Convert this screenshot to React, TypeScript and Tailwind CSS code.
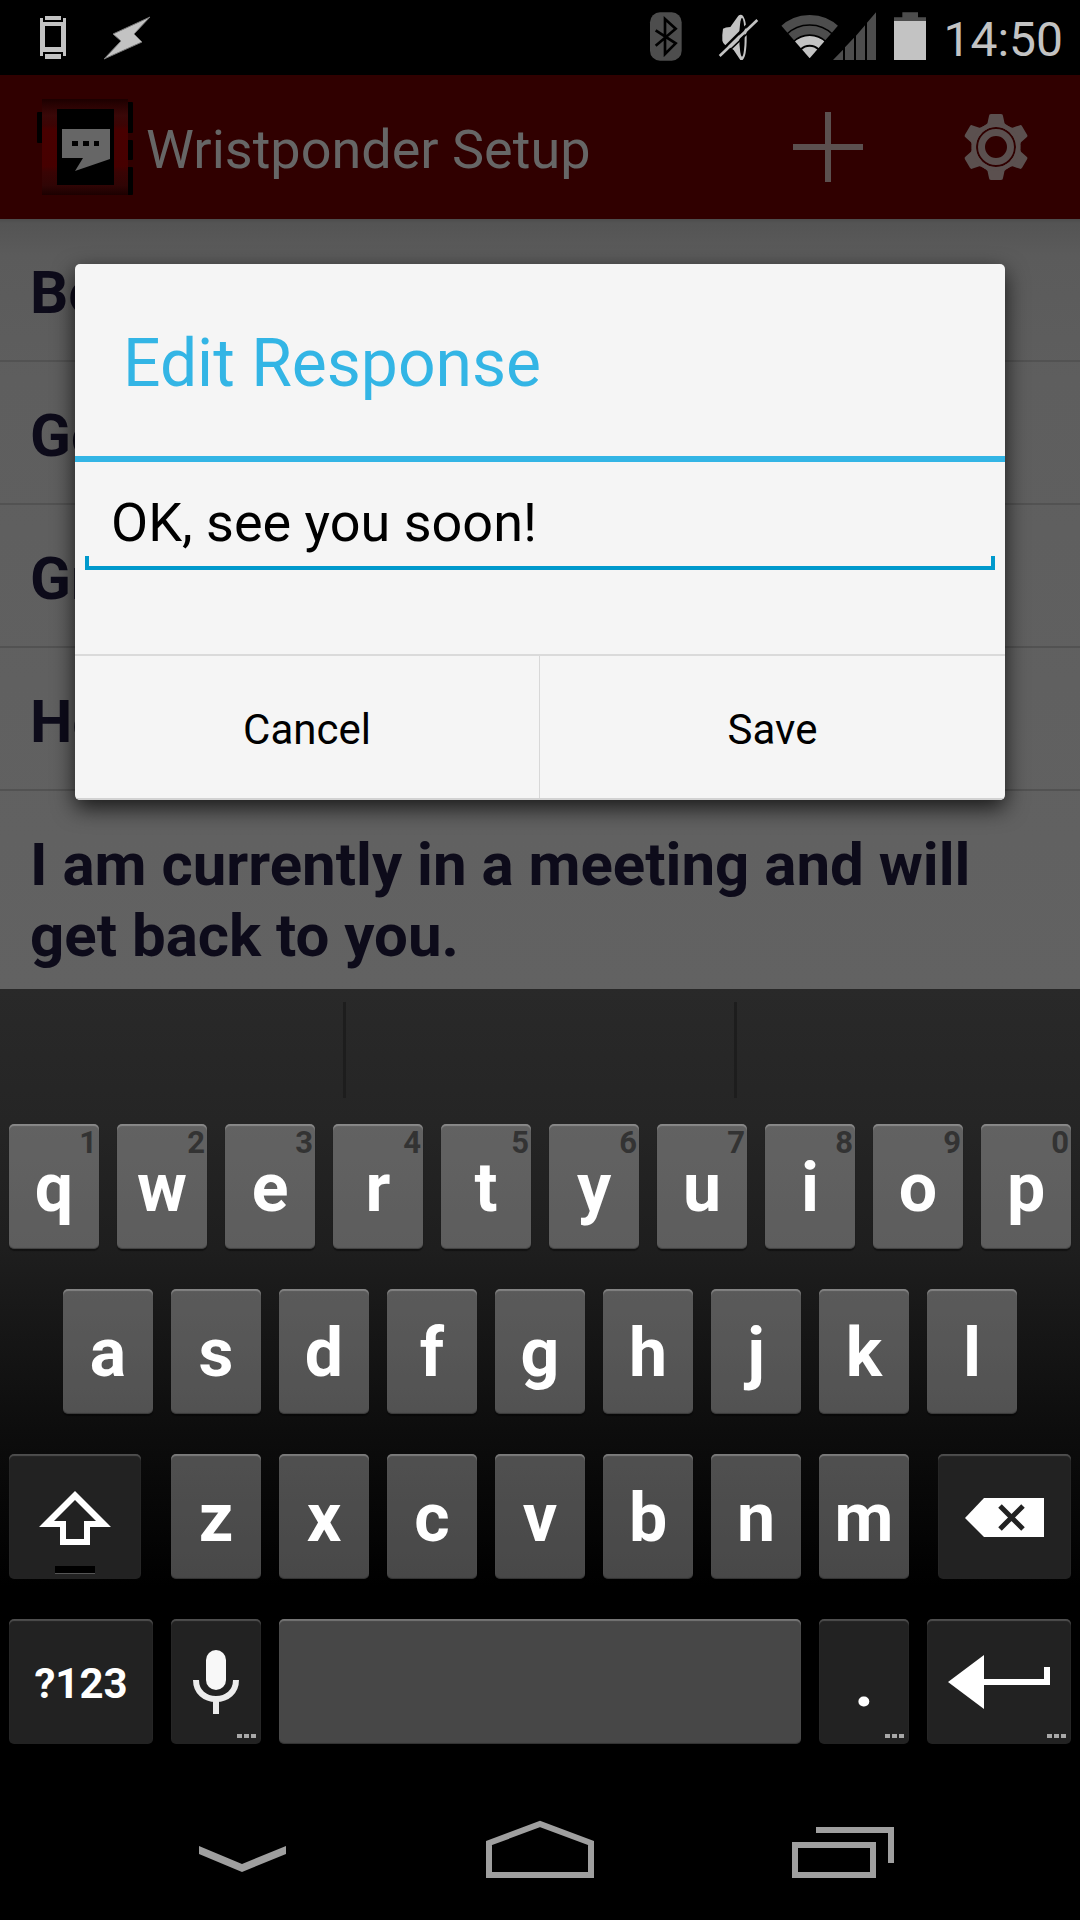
import React, { useState } from "react";

const responses = ["Be", "Go", "Gr", "He", "I am currently in a meeting and will get back to you."];

function StatusBar() {
  return (
    <header className="flex h-[75px] shrink-0 items-start justify-between bg-black pt-3 pr-[17px] pl-10">
      <div className="flex items-start gap-[38px]">
        <svg width="26" height="48" viewBox="0 0 26 48" fill="#c3c3c3" aria-hidden="true">
          <path d="M5 4h16v4H5zM5 42h16v5H5z" />
          <path fillRule="evenodd" d="M0 6h3v4h20V6h3v38h-3v-4H3v4H0zM5 14v21h16V14z" />
        </svg>
        <svg width="48" height="48" viewBox="0 0 48 48" fill="#c3c3c3" aria-hidden="true">
          <path d="M46 5L9 22l8 7L0 47l38-17-8-8z" stroke="#777" strokeWidth="1" strokeLinejoin="round" />
        </svg>
      </div>
      <div className="flex items-start">
        <svg width="34" height="50" viewBox="150 36 102 150" aria-hidden="true">
          <rect x="153" y="37" width="95" height="145" rx="30" fill="#4d4d4d" />
          <path d="M170 91L230 130L198 162V57L230 86L170 137" fill="none" stroke="#000" strokeWidth="8" />
        </svg>
        <svg className="ml-[35px]" width="41" height="50" viewBox="357 36 123 150" aria-hidden="true">
          <path d="M372 86Q379 81 394 81L418 47Q423 43 429 45Q443 55 443 112Q443 170 431 180H424L404 150L390 140Q374 136 370 122Q369 104 372 86Z" fill="#c3c3c3" />
          <ellipse cx="429" cy="112" rx="8" ry="58" fill="#000" />
          <path d="M362 158L470 50" stroke="#000" strokeWidth="8" />
          <path d="M362 168L475 60" stroke="#c3c3c3" strokeWidth="8" />
          <path d="M368 174L481 66" stroke="#000" strokeWidth="5" />
        </svg>
        <svg className="ml-5" width="99" height="50" viewBox="537 36 297 150" aria-hidden="true">
          <defs>
            <clipPath id="wifi-fan">
              <path d="M629 175L511 39L570 0H690L747 39Z" />
            </clipPath>
          </defs>
          <g clipPath="url(#wifi-fan)" fill="none">
            <circle cx="629" cy="175" r="116" stroke="#4d4d4d" strokeWidth="28" />
            <circle cx="629" cy="175" r="85" stroke="#4d4d4d" strokeWidth="26" />
            <circle cx="629" cy="175" r="54" stroke="#c3c3c3" strokeWidth="26" />
            <circle cx="629" cy="175" r="35" fill="#c3c3c3" />
          </g>
          <path d="M699 180L729 149V180ZM735 180V142L762 113V180ZM768 180V107L795 76V180ZM801 180V68L828 37V180Z" fill="#4d4d4d" />
        </svg>
        <svg className="ml-4" width="32" height="50" viewBox="876 36 96 150" aria-hidden="true">
          <path d="M876 63V52H901V37H948V52H972V63Z" fill="#4d4d4d" />
          <path d="M876 63H972V180H876Z" fill="#c3c3c3" />
        </svg>
        <time className="ml-[17px] text-[48px] leading-[56px] text-[#c3c3c3]">14:50</time>
      </div>
    </header>
  );
}

function AppIcon() {
  return (
    <svg width="96" height="96" viewBox="0 0 96 96" aria-hidden="true">
      <defs>
        <linearGradient id="strap" x1="0" y1="0" x2="0" y2="1">
          <stop offset="0" stopColor="#1c0000" />
          <stop offset="0.08" stopColor="#2c0303" />
          <stop offset="0.17" stopColor="#3a0808" />
          <stop offset="0.27" stopColor="#3c0404" />
          <stop offset="0.32" stopColor="#480000" />
          <stop offset="0.7" stopColor="#460000" />
          <stop offset="0.76" stopColor="#390404" />
          <stop offset="0.9" stopColor="#300505" />
          <stop offset="1" stopColor="#1c0000" />
        </linearGradient>
      </defs>
      <rect x="0" y="13" width="8" height="31" rx="1" fill="#000" />
      <rect x="88" y="3" width="8" height="31" rx="1" fill="#000" />
      <rect x="88" y="41" width="8" height="20" rx="1" fill="#000" />
      <rect x="88" y="68" width="8" height="28" rx="1" fill="#000" />
      <rect x="5" y="0" width="86" height="96" fill="url(#strap)" />
      <rect x="20" y="10" width="57" height="76" fill="#000" />
      <path d="M25 30H73V60L38 72L46 59H25Z" fill="#666" />
      <path d="M35 42h6v5h-6zM46 42h6v5h-6zM57 42h5v5h-5z" fill="#000" />
    </svg>
  );
}

function ActionBar() {
  return (
    <div className="flex h-36 shrink-0 items-center bg-[#300000] pr-[51px] pl-[37px]">
      <AppIcon />
      <h1 className="ml-[13px] flex-1 pt-[6px] text-[54px] leading-[64px] text-[#666]">Wristponder Setup</h1>
      <button type="button" aria-label="Add response">
        <svg width="72" height="72" viewBox="-36 -36 72 72">
          <path d="M-35 0H35M0 -35V35" stroke="#5b504f" strokeWidth="6" />
        </svg>
      </button>
      <button type="button" aria-label="Settings" className="ml-[99px]">
        <svg width="66" height="66" viewBox="-33 -33 66 66" fill="#5b504f">
          {[0, 60, 120, 180, 240, 300].map((angle) => (
            <path
              key={angle}
              transform={`rotate(${angle})`}
              d="M-5 -33H5Q7 -33 7 -31L8.500 -24Q9 -23 14 -20L11 -16.700A20 20 0 0 0 -11 -16.700L-14 -20Q-9 -23 -8.500 -24L-7 -31Q-7 -33 -5 -33Z"
            />
          ))}
          <circle r="22" fill="none" stroke="#5b504f" strokeWidth="4" />
          <circle r="14.500" fill="none" stroke="#5b504f" strokeWidth="7" />
        </svg>
      </button>
    </div>
  );
}

function EditDialog() {
  const [text, setText] = useState("OK, see you soon!");
  return (
    <div
      role="dialog"
      aria-labelledby="dialog-title"
      className="absolute inset-x-[75px] top-[45px] overflow-hidden rounded-[5px] bg-[#f5f5f5] shadow-[0_8px_22px_rgba(0,0,0,0.75)]"
    >
      <h2
        id="dialog-title"
        className="flex h-[198px] items-center border-b-[6px] border-[#33b5e5] px-12 pt-2 text-[66px] leading-[78px] text-[#33b5e5]"
      >
        Edit Response
      </h2>
      <div className="px-[10px] pb-[84px]">
        <div className="relative">
          <input
            type="text"
            aria-label="Response"
            value={text}
            onChange={(e) => setText(e.target.value)}
            className="block h-[108px] w-full border-b-4 border-[#0099cc] bg-transparent px-[26px] pt-4 text-[54px] leading-[64px] text-black outline-none"
          />
          <span className="absolute bottom-0 left-0 h-[14px] w-1 bg-[#0099cc]" />
          <span className="absolute right-0 bottom-0 h-[14px] w-1 bg-[#0099cc]" />
        </div>
      </div>
      <div className="grid grid-cols-2 border-t-2 border-b-2 border-t-[#dadada] border-b-[#d2d2d2] text-[42px] leading-[50px] text-black">
        <button type="button" className="h-[142px] border-r border-[#d8d8d8] pt-[6px]">Cancel</button>
        <button type="button" className="h-[142px] pt-[6px]">Save</button>
      </div>
    </div>
  );
}

function Responses() {
  return (
    <main className="relative min-h-0 flex-1">
      <div className="h-full overflow-hidden bg-[linear-gradient(#4c4c4c_0px,#545454_4px,#5b5b5b_36px,#5e5e5e_160px,#626262_100%)]">
        <ul>
          {responses.map((response) => (
            <li
              key={response}
              className="border-b-2 border-[#525252] px-[30px] pt-[38px] pb-8 text-[60px] leading-[71px] font-bold text-[#0d0b1a]"
            >
              {response}
            </li>
          ))}
        </ul>
      </div>
      <EditDialog />
    </main>
  );
}

type KeyProps = {
  children?: React.ReactNode;
  label?: string;
  hint?: string;
  dark?: boolean;
  more?: boolean;
  small?: boolean;
  cell?: string;
};

function Key({ children, label, hint, dark, more, small, cell = "col-span-2 px-[9px]" }: KeyProps) {
  return (
    <div className={cell}>
      <button
        type="button"
        aria-label={label}
        className={`relative flex h-[125px] w-full items-center justify-center rounded-[5px] pt-[3px] font-bold text-white ${
          small ? "text-[42px]" : "text-[68px]"
        } ${
          dark
            ? "bg-[#222222] shadow-[inset_0_2px_1px_rgba(255,255,255,0.2)]"
            : "bg-white/28 shadow-[inset_0_2px_1px_rgba(255,255,255,0.25),inset_0_-1px_1px_rgba(0,0,0,0.3),0_2px_1px_rgba(0,0,0,0.4)]"
        }`}
      >
        {children}
        {hint && <span className="absolute top-px right-[2px] text-[31px] leading-9 text-[#333]">{hint}</span>}
        {more && (
          <span className="absolute right-[5px] bottom-[6px] flex gap-[2px]">
            <span className="h-1 w-[5px] bg-[#a8a8a8]" />
            <span className="h-1 w-[5px] bg-[#a8a8a8]" />
            <span className="h-1 w-[5px] bg-[#a8a8a8]" />
          </span>
        )}
      </button>
    </div>
  );
}

function Keyboard() {
  const row = "grid grid-cols-20";
  return (
    <section
      aria-label="Keyboard"
      className="shrink-0 bg-[linear-gradient(#292929_0%,#252525_17%,#1e1e1e_33%,#0d0d0d_56%,#000000_76%)] pb-8"
    >
      <div className="flex h-[135px] pt-[13px] pb-[26px]">
        <div className="flex-[344] border-r-[3px] border-[#1d1d1d]" />
        <div className="flex-[390] border-r-[3px] border-[#1d1d1d]" />
        <div className="flex-[344]" />
      </div>
      <div className="flex flex-col gap-10">
        <div className={row}>
          {"qwertyuiop".split("").map((letter, i) => (
            <Key key={letter} hint={String((i + 1) % 10)}>
              {letter}
            </Key>
          ))}
        </div>
        <div className={row}>
          <span />
          {"asdfghjkl".split("").map((letter) => (
            <Key key={letter}>{letter}</Key>
          ))}
        </div>
        <div className={row}>
          <Key dark label="Shift" cell="col-span-3 pl-[9px] pr-[21px]">
            <svg width="72" height="54" viewBox="0 0 72 54">
              <path fill="#fff" fillRule="evenodd" d="M36 0L72 36H51V54H21V36H0ZM36 9L15 30H27V48H45V30H57Z" />
            </svg>
            <span className="absolute bottom-[5px] h-2 w-10 border-b border-[#555] bg-black" />
          </Key>
          {"zxcvbnm".split("").map((letter) => (
            <Key key={letter}>{letter}</Key>
          ))}
          <Key dark label="Delete" cell="col-span-3 pl-5 pr-[9px]">
            <svg width="80" height="40" viewBox="0 0 80 40">
              <path fill="#fff" d="M0 20L19 0H79V39H19Z" />
              <path d="M35 8L58 31M58 8L35 31" stroke="#222" strokeWidth="5" />
            </svg>
          </Key>
        </div>
        <div className={row}>
          <Key dark small cell="col-span-3 px-[9px]">
            ?123
          </Key>
          <Key dark more label="Voice input">
            <svg width="46" height="66" viewBox="0 0 46 66">
              <rect x="13" y="0" width="20" height="40" rx="10" fill="#f8f8f8" />
              <path d="M3 30C3 42 12 49 23 49S43 42 43 30" fill="none" stroke="#ececec" strokeWidth="6" />
              <path d="M23 49V64" stroke="#ececec" strokeWidth="6" />
            </svg>
          </Key>
          <Key label="Space" cell="col-span-10 px-[9px]" />
          <Key dark more>
            .
          </Key>
          <Key dark more label="Enter" cell="col-span-3 px-[9px]">
            <svg width="102" height="56" viewBox="0 0 102 56" fill="#fff">
              <path d="M0 27L36 0V24H96V12H102V30H36V54Z" />
            </svg>
          </Key>
        </div>
      </div>
    </section>
  );
}

function NavigationBar() {
  return (
    <nav className="flex h-36 shrink-0 items-center justify-center gap-48 bg-black">
      <button type="button" aria-label="Hide keyboard">
        <svg width="108" height="60" viewBox="0 0 108 60" fill="#9f9f9f">
          <path d="M13 28L56 46L100 28V36L56 54L13 36Z" />
        </svg>
      </button>
      <button type="button" aria-label="Home">
        <svg width="108" height="60" viewBox="0 0 108 60" fill="none" stroke="#9f9f9f" strokeWidth="6">
          <path d="M3 57V25L54 6L105 25V57Z" />
        </svg>
      </button>
      <button type="button" aria-label="Recent apps">
        <svg width="108" height="60" viewBox="0 0 108 60" fill="none" stroke="#9f9f9f" strokeWidth="6">
          <path d="M9 27H87V57H9ZM30 12H105V45" />
        </svg>
      </button>
    </nav>
  );
}

export default function App() {
  return (
    <div className="flex h-screen flex-col overflow-hidden bg-black font-[Roboto,sans-serif]">
      <StatusBar />
      <ActionBar />
      <Responses />
      <Keyboard />
      <NavigationBar />
    </div>
  );
}
